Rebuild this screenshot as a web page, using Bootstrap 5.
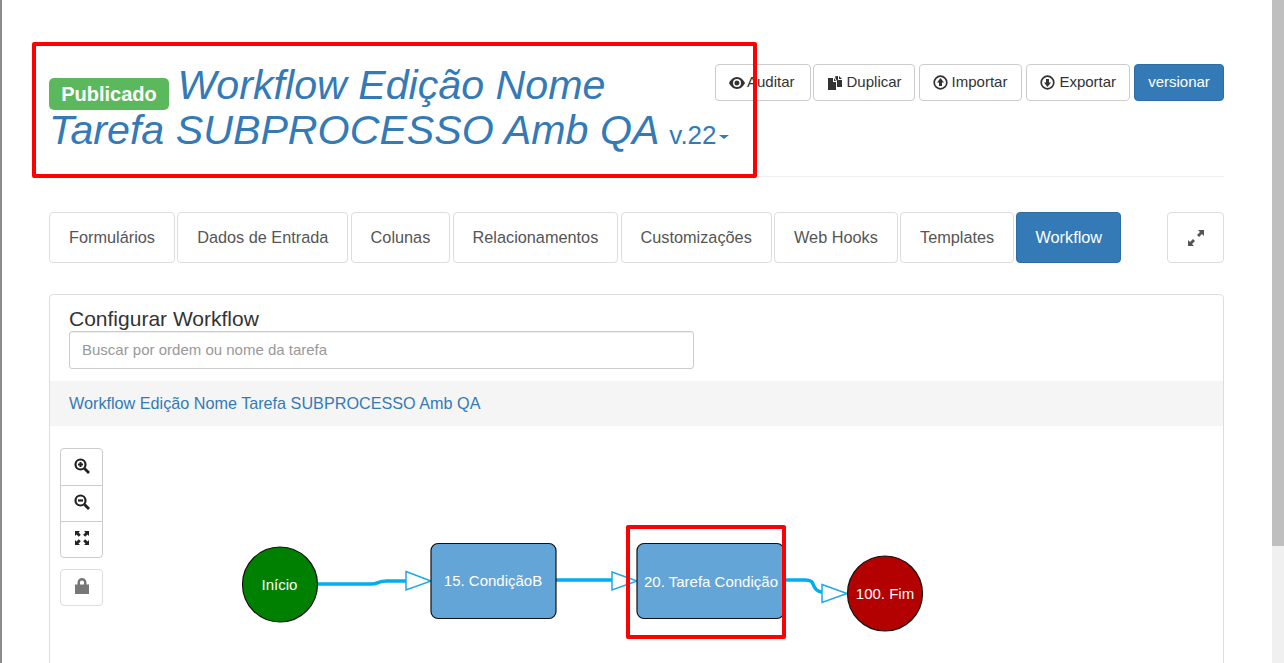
<!DOCTYPE html>
<html lang="pt-BR">
<head>
  <meta charset="UTF-8" />
  <title>Configurar Workflow</title>
  <link href="https://cdn.jsdelivr.net/npm/bootstrap@5.3.0/dist/css/bootstrap.min.css" rel="stylesheet">
  <style>
    html, body { height: 100%; overflow: hidden; }
    body { font-family: "Liberation Sans", Arial, sans-serif; font-size: 14px; color: #333; background: #fff; }
    .shell { width: 1284px; height: 663px; position: relative; overflow: hidden; border-left: 2px solid #8c8c8c; }
    .page-area { width: 1270px; padding: 0 48px 0 47px; }
    .scroll-track { position: absolute; top: 0; right: 0; width: 12px; height: 663px; background: #f0f0f0; }
    .scroll-thumb { width: 12px; height: 546px; background: #bfbfbf; }
    .page-head { height: 176px; }
    .page-rule { border-top: 1px solid #eee; }
    .wf-title { flex: none; width: 690px; margin: 0; padding-top: 63px; font-size: 41.2px; line-height: 45px; font-style: italic; font-weight: 400; color: #337ab7; }
    .wf-version { font-size: 26px; font-style: normal; white-space: nowrap; }
    .wf-caret { display: inline-block; width: 0; height: 0; margin-left: 2px; vertical-align: middle; border-top: 4px solid #337ab7; border-left: 5px solid transparent; border-right: 5px solid transparent; }
    .status-pill { display: inline-block; width: 120px; height: 32px; line-height: 32px; margin: 0 -3px -2px 0; background: #5cb85c; color: #fff; font-size: 20px; font-weight: 700; font-style: normal; text-align: center; border-radius: 5px; vertical-align: -2px; }
    .head-actions { flex: none; margin-left: -24px; padding-top: 64px; gap: 4px; }
    .act-btn { height: 37px; padding: 0 13px; font-size: 15px; color: #333; background: #fff; border: 1px solid #ccc; border-radius: 4px; display: inline-flex; align-items: center; gap: 4px; white-space: nowrap; }
    .act-btn.act-first { margin-right: -2px; padding: 0 15px 0 13px; gap: 2px; }
    .act-btn.act-dup { padding-right: 12px; }
    .act-btn.act-imp { padding-right: 14px; }
    .act-btn.act-primary { background: #337ab7; border-color: #2e6da4; color: #fff; }
    .tab-row { margin-top: 35px; }
    .tab-list { gap: 2.2px; }
    .tab-item { height: 51px; padding: 0 19px; display: inline-flex; align-items: center; font-size: 16.3px; color: #555; background: #fff; border: 1px solid #ddd; border-radius: 4px; white-space: nowrap; }
    .tab-item.tab-on { padding: 0 18px; background: #337ab7; border-color: #2e6da4; color: #fff; }
    .tab-expand { width: 57px; justify-content: center; padding: 0; }
    .wf-panel { margin-top: 31px; height: 500px; border: 1px solid #ddd; border-radius: 4px; position: relative; }
    .wf-panel-top { padding: 12px 19px; height: 86px; }
    .wf-panel-title { font-size: 21px; line-height: 24px; margin: 0; color: #333; font-weight: 400; }
    .wf-search { width: 625px; height: 38px; padding: 5px 12px 7px; font-size: 15px; border: 1px solid #ccc; border-radius: 3px; box-shadow: inset 0 1px 1px rgba(0,0,0,.075); }
    .wf-search::placeholder { color: #999; }
    .wf-crumb { height: 45px; padding: 0 19px; background: #f5f5f5; font-size: 16.2px; line-height: 45px; color: #337ab7; }
    .zoom-tools { position: absolute; left: 10px; top: 153px; width: 43px; }
    .zoom-group { border: 1px solid #ccc; border-radius: 4px; }
    .zoom-cell { height: 36px; display: flex; align-items: center; justify-content: center; padding-bottom: 3px; }
    .zoom-cell + .zoom-cell { border-top: 1px solid #ccc; }
    .zoom-lock { margin-top: 11px; height: 37px; border: 1px solid #ddd; border-radius: 4px; display: flex; align-items: center; justify-content: center; padding-bottom: 3px; }
    .wf-canvas { position: absolute; left: 0; top: 0; width: 1284px; height: 663px; pointer-events: none; }
    .wf-canvas text { font-family: "Liberation Sans", Arial, sans-serif; font-size: 15px; fill: #fff; text-anchor: middle; }
    .mark-box { position: absolute; border: 4px solid #f00; border-radius: 2px; pointer-events: none; }
    .mark-title { left: 30px; top: 42px; width: 725px; height: 136px; }
    .mark-node { left: 624px; top: 525px; width: 160px; height: 114px; }
  </style>
</head>
<body>
  <div class="shell">
    <div class="page-area">
      <div class="page-head d-flex">
        <h1 class="wf-title"><span class="status-pill">Publicado</span> Workflow Edição Nome<br>Tarefa SUBPROCESSO Amb QA <span class="wf-version">v.22<span class="wf-caret"></span></span></h1>
        <div class="head-actions d-flex align-items-start">
          <button class="act-btn act-first" type="button">
            <svg width="16" height="14" viewBox="0 0 16 14"><path fill="#333" fill-rule="evenodd" d="M8 1C4.500 1 1.500 3.800 0 7c1.500 3.200 4.500 6 8 6s6.500-2.800 8-6C14.500 3.800 11.500 1 8 1Zm0 2a4 4 0 1 1 0 8 4 4 0 0 1 0-8Zm0 1.500a2.500 2.500 0 1 0 0 5 2.500 2.500 0 0 0 0-5Z"/></svg>
            Auditar</button>
          <button class="act-btn act-dup" type="button">
            <svg width="16" height="16" viewBox="0 0 16 16"><path fill="#333" d="M1 3h5v4h3v8H1Zm6 0 2 3H7Zm3-2h1v4h4v7h-5V6L8.500 3.500 8 1.500Zm2 0 3 3h-3Z"/></svg>
            Duplicar</button>
          <button class="act-btn act-imp" type="button">
            <svg width="15" height="15" viewBox="0 0 15 15"><circle cx="7.500" cy="7.500" r="6.300" fill="none" stroke="#333" stroke-width="1.700"/><path fill="#333" d="M7.500 3 11 7.500H9V11H6V7.500H4Z"/></svg>
            Importar</button>
          <button class="act-btn" type="button">
            <svg width="15" height="15" viewBox="0 0 15 15"><circle cx="7.500" cy="7.500" r="6.300" fill="none" stroke="#333" stroke-width="1.700"/><path fill="#333" d="M7.500 12 4 7.500H6V4h3v3.500h2Z"/></svg>
            Exportar</button>
          <button class="act-btn act-primary" type="button">versionar</button>
        </div>
      </div>
      <div class="page-rule"></div>

      <div class="tab-row d-flex justify-content-between">
        <div class="tab-list d-flex">
          <a class="tab-item text-decoration-none">Formulários</a>
          <a class="tab-item text-decoration-none">Dados de Entrada</a>
          <a class="tab-item text-decoration-none">Colunas</a>
          <a class="tab-item text-decoration-none">Relacionamentos</a>
          <a class="tab-item text-decoration-none">Customizações</a>
          <a class="tab-item text-decoration-none">Web Hooks</a>
          <a class="tab-item text-decoration-none">Templates</a>
          <a class="tab-item tab-on text-decoration-none">Workflow</a>
        </div>
        <a class="tab-item tab-expand">
          <svg width="18" height="18" viewBox="0 0 18 18"><path fill="#555" d="M11 1h6v6l-2-2-3 3-2-2 3-3ZM7 17H1v-6l2 2 3-3 2 2-3 3Z"/></svg>
        </a>
      </div>

      <div class="wf-panel">
        <div class="wf-panel-top">
          <h3 class="wf-panel-title">Configurar Workflow</h3>
          <input class="wf-search d-block" type="text" placeholder="Buscar por ordem ou nome da tarefa">
        </div>
        <div class="wf-crumb">Workflow Edição Nome Tarefa SUBPROCESSO Amb QA</div>
        <div class="zoom-tools">
          <div class="zoom-group">
            <div class="zoom-cell">
              <svg width="16" height="16" viewBox="0 0 16 16"><circle cx="6.500" cy="6.500" r="5" fill="none" stroke="#222" stroke-width="2.200"/><path stroke="#222" stroke-width="2.800" d="m10.500 10.500 4.500 4.500"/><path stroke="#222" stroke-width="2" d="M4 6.500h5M6.500 4v5"/></svg>
            </div>
            <div class="zoom-cell">
              <svg width="16" height="16" viewBox="0 0 16 16"><circle cx="6.500" cy="6.500" r="5" fill="none" stroke="#222" stroke-width="2.200"/><path stroke="#222" stroke-width="2.800" d="m10.500 10.500 4.500 4.500"/><path stroke="#222" stroke-width="2.200" d="M4 6.500h5"/></svg>
            </div>
            <div class="zoom-cell">
              <svg width="16" height="16" viewBox="0 0 16 16"><path fill="#222" d="M1 1h5L4.500 2.500 6.800 4.800 4.800 6.800 2.500 4.500 1 6ZM15 1v5l-1.500-1.500-2.300 2.300-2-2 2.300-2.300L10 1ZM1 15v-5l1.500 1.500 2.300-2.300 2 2-2.300 2.300L6 15ZM15 15h-5l1.500-1.500-2.300-2.300 2-2 2.300 2.300L15 10Z"/></svg>
            </div>
          </div>
          <div class="zoom-lock">
            <svg width="14" height="16" viewBox="0 0 14 16"><path fill="#777" fill-rule="evenodd" d="M2.500 6.500V4.500a4.500 4.500 0 0 1 9 0v2H14V16H0V6.500Zm2.500 0h4V4.500a2 2 0 0 0-4 0Z"/></svg>
          </div>
        </div>
      </div>
    </div>

    <div class="scroll-track"><div class="scroll-thumb"></div></div>

    <!-- free canvas: workflow diagram, coordinates as in the shell -->
    <svg class="wf-canvas" viewBox="2 0 1284 663">
      <path d="M316 584h55c8 0 6-3 16-3h20M555 580h60M785 580h20c9 0 7 4 10 8 2 3 4 4 8 4" fill="none" stroke="#00aeef" stroke-width="3.500"/>
      <path d="M406 571.500 431 581 406 590Z M612 572 637 581 612 590Z M822 584.500 847 593.500 822 602.500Z" fill="#fff" stroke="#1fa8e8" stroke-width="1.500"/>
      <circle cx="280" cy="584.500" r="37.500" fill="#008000" stroke="#111" stroke-width="1.200"/>
      <text x="279.500" y="590">Início</text>
      <rect x="431" y="543.500" width="125" height="75" rx="7" fill="#63a5d6" stroke="#111" stroke-width="1.200"/>
      <text x="493" y="586">15. CondiçãoB</text>
      <rect x="637" y="543.500" width="147" height="75" rx="7" fill="#63a5d6" stroke="#111" stroke-width="1.200"/>
      <text x="711" y="587">20. Tarefa Condição</text>
      <circle cx="885" cy="593.500" r="37.500" fill="#b30000" stroke="#111" stroke-width="1.200"/>
      <text x="885" y="599">100. Fim</text>
    </svg>
    <div class="mark-box mark-title"></div>
    <div class="mark-box mark-node"></div>
  </div>
  <script src="https://cdn.jsdelivr.net/npm/bootstrap@5.3.0/dist/js/bootstrap.bundle.min.js"></script>
</body>
</html>
